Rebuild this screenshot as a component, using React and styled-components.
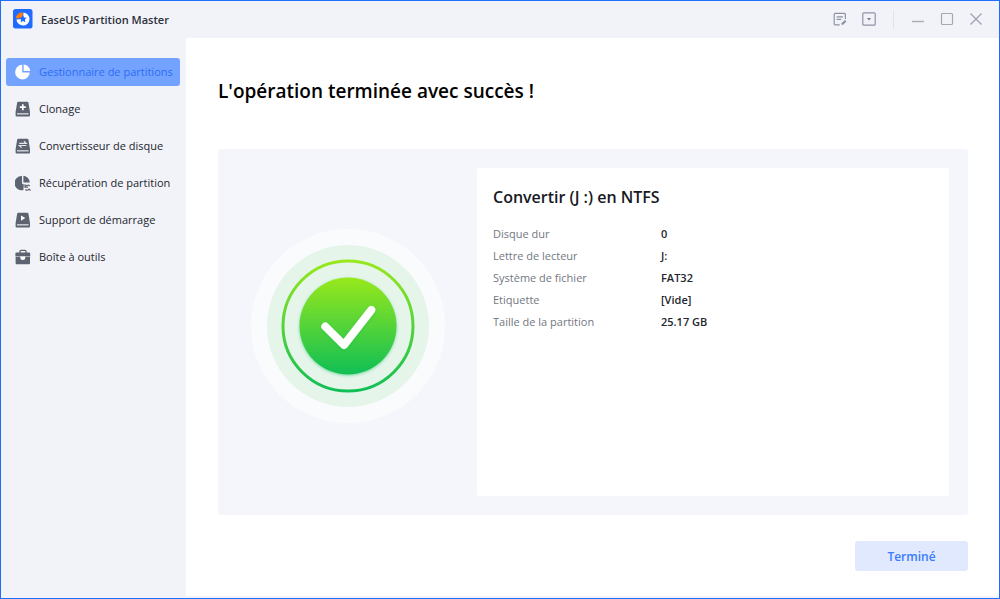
import React from "react";
import styled, { createGlobalStyle } from "styled-components";

const GlobalStyle = createGlobalStyle`
  * {
    box-sizing: border-box;
  }

  body {
    margin: 0;
    font-family: "Open Sans", "Noto Sans", sans-serif;
    font-size: 11px;
    color: #23262e;
  }
`;

const menu = [
  { label: "Gestionnaire de partitions", icon: PieIcon, active: true },
  { label: "Clonage", icon: CloneIcon },
  { label: "Convertisseur de disque", icon: ConvertIcon },
  { label: "Récupération de partition", icon: RecoverIcon },
  { label: "Support de démarrage", icon: BootIcon },
  { label: "Boîte à outils", icon: ToolboxIcon },
];

const details = [
  ["Disque dur", "0"],
  ["Lettre de lecteur", "J:"],
  ["Système de fichier", "FAT32"],
  ["Etiquette", "[Vide]"],
  ["Taille de la partition", "25.17 GB"],
];

function App() {
  return (
    <Window>
      <GlobalStyle />
      <TitleBar>
        <Logo />
        <AppName>EaseUS Partition Master</AppName>
        <TitleButton aria-label="Journal">
          <NoteIcon />
        </TitleButton>
        <TitleButton aria-label="Menu">
          <MenuIcon />
        </TitleButton>
        <Divider />
        <TitleButton aria-label="Réduire">
          <svg width="14" height="14" viewBox="0 0 14 14">
            <path d="M1 9.5h12" stroke="#a9adbb" strokeWidth="1.4" />
          </svg>
        </TitleButton>
        <TitleButton aria-label="Agrandir">
          <svg width="14" height="14" viewBox="0 0 14 14" fill="none">
            <rect x="1.5" y="1.5" width="11" height="11" rx="1" stroke="#a3a7b6" strokeWidth="1.2" />
          </svg>
        </TitleButton>
        <TitleButton aria-label="Fermer">
          <svg width="14" height="14" viewBox="0 0 14 14">
            <path d="M1.5 1.5l11 11M12.5 1.5l-11 11" stroke="#9a9eae" strokeWidth="1.2" />
          </svg>
        </TitleButton>
      </TitleBar>
      <Body>
        <Sidebar>
          {menu.map(({ label, icon: Icon, active }) => (
            <MenuItem key={label} $active={active}>
              <Icon />
              {label}
            </MenuItem>
          ))}
        </Sidebar>
        <Content>
          <Title>L'opération terminée avec succès !</Title>
          <Panel>
            <Status>
              <SuccessIcon />
            </Status>
            <Card>
              <CardTitle>Convertir (J :) en NTFS</CardTitle>
              <Details>
                {details.map(([name, value]) => (
                  <React.Fragment key={name}>
                    <dt>{name}</dt>
                    <dd>{value}</dd>
                  </React.Fragment>
                ))}
              </Details>
            </Card>
          </Panel>
          <DoneButton>Terminé</DoneButton>
        </Content>
      </Body>
    </Window>
  );
}

function Logo() {
  return (
    <svg width="20" height="20" viewBox="0 0 20 20">
      <rect width="19.500" height="19.500" rx="2.500" fill="#1f6bff" />
      <path d="M10.500 3.600A6.500 6.500 0 1 1 3.500 10.500L10 10z" fill="#fff" />
      <path d="M9.600 3.300v4.200L7 9.200H2.600A6.800 6.800 0 0 1 9.600 3.300z" fill="#ff7d0a" />
      <path
        d="M10 6.200l1.200 2.300 2.600.3-1.900 1.800.5 2.600-2.400-1.200-2.400 1.200.5-2.600-1.900-1.800 2.600-.3z"
        fill="#1f6bff"
      />
    </svg>
  );
}

function NoteIcon() {
  return (
    <svg width="14" height="14" viewBox="0 0 14 14" fill="none" stroke="#8f93a5" strokeWidth="1.2">
      <path d="M12.400 7V2.400a1 1 0 0 0-1-1H2.200a1 1 0 0 0-1 1v9.400a1 1 0 0 0 1 1h4.500" />
      <path d="M3.600 4.800h6.400M3.600 7.300h4.600" />
      <path d="M12.700 8.700L8.800 12.500" strokeWidth="2.200" />
    </svg>
  );
}

function MenuIcon() {
  return (
    <svg width="14" height="14" viewBox="0 0 14 14" fill="none">
      <rect x="0.8" y="0.8" width="12.4" height="12.4" rx="1" stroke="#8f93a5" strokeWidth="1.2" />
      <path d="M4.800 6h4.400L7 8.400z" fill="#7d8194" />
    </svg>
  );
}

function PieIcon() {
  return (
    <svg width="16" height="16" viewBox="0 0 16 16" fill="#fff">
      <path d="M7.200.800v7.600h7.500A7.300 7.300 0 1 1 7.200.800z" />
      <path d="M8.600.400a7 7 0 0 1 6.500 6.600H8.600z" />
    </svg>
  );
}

// disk body shared by the drive icons
function Drive({ children }) {
  return (
    <svg width="16" height="16" viewBox="0 0 16 16">
      <path
        d="M3.200.800h9.200a1 1 0 0 1 1 .8L15 11v3.400a1 1 0 0 1-1 1H1.600a1 1 0 0 1-1-1V11L2.200 1.600a1 1 0 0 1 1-.8z"
        fill="#5d6370"
      />
      <path d="M2 12h11.600v1.600H2z" fill="#c3c7cf" />
      {children}
    </svg>
  );
}

function CloneIcon() {
  return (
    <Drive>
      <path d="M7.800 3.200v6M4.800 6.200h6" stroke="#fff" strokeWidth="1.700" />
    </Drive>
  );
}

function ConvertIcon() {
  return (
    <Drive>
      <path d="M4.200 5.300h7L9 3.200M11.400 7.500h-7l2.200 2.100" stroke="#e4e6ea" strokeWidth="1.200" fill="none" />
    </Drive>
  );
}

function BootIcon() {
  return (
    <Drive>
      <path d="M6 3.400v5.400l4.300-2.700z" fill="#fff" />
    </Drive>
  );
}

function RecoverIcon() {
  return (
    <svg width="16" height="16" viewBox="0 0 16 16" fill="#5d6370">
      <path d="M7 .900v7.500l1.800 1.200-.4 5.500A7.200 7.200 0 1 1 7 .900z" />
      <path d="M8.400.700a7 7 0 0 1 6.400 6.900H8.400z" />
      <path
        d="M10 9.200v3h3M10.400 11.800a2.500 2.500 0 0 1 4.300-.6M10.400 14.500a2.600 2.600 0 0 0 3.600-.4l1.500 1.400"
        stroke="#5d6370"
        strokeWidth="1.200"
        fill="none"
      />
    </svg>
  );
}

function ToolboxIcon() {
  return (
    <svg width="16" height="16" viewBox="0 0 16 16">
      <path d="M5 4V2.300a1 1 0 0 1 1-1h4a1 1 0 0 1 1 1V4" stroke="#5d6370" strokeWidth="1.300" fill="none" />
      <path d="M1.400 3.600h12.800a1 1 0 0 1 1 1v2.900H.400V4.600a1 1 0 0 1 1-1z" fill="#5d6370" />
      <path d="M.600 8.100h14.400v6.100a1 1 0 0 1-1 1H1.600a1 1 0 0 1-1-1z" fill="#5d6370" />
      <path d="M5.300 7.500h5v.9a2.500 2.500 0 0 1-5 0z" fill="#fff" />
    </svg>
  );
}

function SuccessIcon() {
  return (
    <svg width="200" height="200" viewBox="0 0 200 200">
      <defs>
        <linearGradient id="green" x1="0" y1="0" x2="0" y2="1">
          <stop offset="0" stopColor="#98e81c" />
          <stop offset="1" stopColor="#10bf55" />
        </linearGradient>
        <filter id="glow" x="-20%" y="-20%" width="140%" height="140%">
          <feDropShadow dx="0" dy="1" stdDeviation="1.500" floodColor="#10bf55" floodOpacity="0.5" />
        </filter>
      </defs>
      <circle cx="100" cy="100" r="97" fill="#fafbfd" />
      <circle cx="100" cy="100" r="81" fill="#e5f5ea" />
      <circle cx="100" cy="100" r="65" fill="none" stroke="url(#green)" strokeWidth="3" />
      <circle cx="100" cy="100" r="48.500" fill="url(#green)" filter="url(#glow)" />
      <path
        d="M77.300 100.500L96 119l27.300-35"
        fill="none"
        stroke="#fff"
        strokeWidth="8"
        strokeLinecap="round"
        strokeLinejoin="round"
        filter="url(#glow)"
      />
    </svg>
  );
}

const Window = styled.div`
  display: flex;
  flex-direction: column;
  min-height: 100vh;
  border: 1px solid #1f6fff;
  background: #f2f3f8;
`;

const TitleBar = styled.header`
  display: flex;
  align-items: center;
  height: 37px;
  padding: 0 16px 1px 12px;
`;

const AppName = styled.span`
  flex: 1;
  margin-left: 8px;
  font-weight: 600;
  color: #2b303b;
`;

const TitleButton = styled.button`
  display: flex;
  margin-left: 15px;
  padding: 0;
  border: 0;
  background: none;
`;

const Divider = styled.span`
  width: 1px;
  height: 19px;
  margin: 0 2px 0 17px;
  background: #dfe3ec;
`;

const Body = styled.div`
  flex: 1;
  display: flex;
`;

const Sidebar = styled.nav`
  display: flex;
  flex-direction: column;
  gap: 9px;
  width: 185px;
  padding: 20px 6px 0 5px;
`;

const MenuItem = styled.button`
  display: flex;
  align-items: center;
  gap: 8px;
  height: 28px;
  padding: 0 0 1px 9px;
  border: 0;
  border-radius: 3px;
  background: ${(props) => (props.$active ? "#74a3ff" : "none")};
  color: ${(props) => (props.$active ? "#2b6df5" : "#23262e")};
  font: inherit;
  white-space: nowrap;

  svg {
    flex-shrink: 0;
  }
`;

const Content = styled.main`
  flex: 1;
  display: flex;
  flex-direction: column;
  margin-bottom: 2px;
  padding: 39px 31px 25px 32px;
  border-radius: 0 0 4px 0;
  background: #fff;
`;

const Title = styled.h1`
  margin: 0 0 44px;
  font-size: 19px;
  line-height: 28px;
  font-weight: 600;
  color: #000;
`;

const Panel = styled.section`
  flex: 1;
  display: flex;
  padding: 19px 19px 19px 0;
  border-radius: 3px;
  background: #f5f6fb;
`;

const Status = styled.div`
  display: flex;
  align-items: center;
  justify-content: center;
  width: 259px;
  padding-bottom: 12px;
`;

const Card = styled.div`
  flex: 1;
  padding: 17px 16px;
  border-radius: 2px;
  background: #fff;
`;

const CardTitle = styled.h2`
  margin: 0 0 14px;
  font-size: 16px;
  line-height: 24px;
  font-weight: 600;
  color: #17191f;
`;

const Details = styled.dl`
  display: grid;
  grid-template-columns: 168px 1fr;
  margin: 0;
  line-height: 22px;

  dt {
    color: #73777f;
  }

  dd {
    margin: 0;
    font-weight: 600;
  }
`;

const DoneButton = styled.button`
  align-self: flex-end;
  width: 113px;
  height: 30px;
  margin-top: 26px;
  border: 0;
  border-radius: 3px;
  background: #e0e9fd;
  color: #3a7bff;
  font: inherit;
  font-size: 12px;
  font-weight: 600;
`;

export default App;
